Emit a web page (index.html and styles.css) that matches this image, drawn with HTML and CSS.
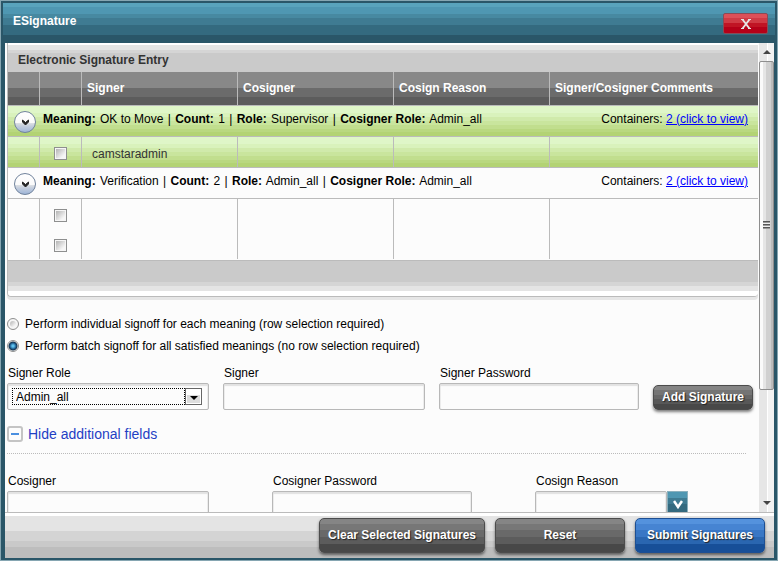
FILE: index.html
```html
<!DOCTYPE html>
<html lang="en">
<head>
<meta charset="utf-8">
<title>ESignature</title>
<link rel="stylesheet" href="styles.css">
</head>
<body>
<div class="dialog">
  <header class="titlebar">
    <h1 class="title">ESignature</h1>
    <button class="close" type="button" aria-label="Close">
      <svg width="10" height="10" viewBox="0 0 10 10"><path d="M1.500 0.500L8.500 9.500M8.500 0.500L1.500 9.500" stroke="#e6e6e6" stroke-width="1.800" fill="none"/><path d="M0 .5h3M7 .5h3M0 9.500h3M7 9.500h3" stroke="#e6e6e6"/></svg>
    </button>
  </header>

  <div class="body">
    <main class="content">
      <section class="panel">
        <h2 class="panel-title">Electronic Signature Entry</h2>
        <table class="grid">
          <colgroup><col class="c-toggle"><col class="c-check"><col class="c-data"><col class="c-data"><col class="c-data"><col></colgroup>
          <thead>
            <tr><th></th><th></th><th>Signer</th><th>Cosigner</th><th>Cosign Reason</th><th>Signer/Cosigner Comments</th></tr>
          </thead>
          <tbody>
            <tr class="group ok">
              <td colspan="6"><div class="group-row">
                <button class="toggle" type="button" aria-label="Collapse OK to Move">
                  <svg width="24" height="24" viewBox="0 0 24 24"><defs><linearGradient id="orb" x1="0" y1="0" x2="0" y2="1"><stop offset="0" stop-color="#fff"/><stop offset=".54" stop-color="#fafafa"/><stop offset=".56" stop-color="#dcdfe3"/><stop offset=".7" stop-color="#c3cddd"/><stop offset="1" stop-color="#9cb4d8"/></linearGradient></defs><circle cx="12" cy="12" r="10.5" fill="url(#orb)" stroke="#71839c"/><path d="M9.500 10v2l3 3 3-3v-2l-3 2.500z" fill="#222" stroke="#222"/></svg>
                </button>
                <span class="summary"><b>Meaning:</b> OK to Move <i>|</i> <b>Count:</b> 1 <i>|</i> <b>Role:</b> Supervisor <i>|</i> <b>Cosigner Role:</b> Admin_all</span>
                <span class="containers">Containers: <a href="#ok">2 (click to view)</a></span>
              </div></td>
            </tr>
            <tr class="entry ok ruled">
              <td></td><td class="pick"><input type="checkbox" aria-label="Select camstaradmin"></td><td>camstaradmin</td><td></td><td></td><td></td>
            </tr>
            <tr class="group">
              <td colspan="6"><div class="group-row">
                <button class="toggle" type="button" aria-label="Collapse Verification">
                  <svg width="24" height="24" viewBox="0 0 24 24"><circle cx="12" cy="12" r="10.5" fill="url(#orb)" stroke="#71839c"/><path d="M9.500 10v2l3 3 3-3v-2l-3 2.500z" fill="#222" stroke="#222"/></svg>
                </button>
                <span class="summary"><b>Meaning:</b> Verification <i>|</i> <b>Count:</b> 2 <i>|</i> <b>Role:</b> Admin_all <i>|</i> <b>Cosigner Role:</b> Admin_all</span>
                <span class="containers">Containers: <a href="#verification">2 (click to view)</a></span>
              </div></td>
            </tr>
            <tr class="entry"><td></td><td class="pick"><input type="checkbox" aria-label="Select verification 1"></td><td></td><td></td><td></td><td></td></tr>
            <tr class="entry"><td></td><td class="pick"><input type="checkbox" aria-label="Select verification 2"></td><td></td><td></td><td></td><td></td></tr>
          </tbody>
        </table>
        <div class="panel-foot"></div>
      </section>

      <div class="modes">
        <label><input type="radio" name="mode">Perform individual signoff for each meaning (row selection required)</label>
        <label><input type="radio" name="mode" checked>Perform batch signoff for all satisfied meanings (no row selection required)</label>
      </div>

      <div class="fields signer">
        <div class="field">
          <label for="role">Signer Role</label>
          <div class="box role">
            <select id="role"><option>Admin_all</option></select>
            <span class="drop"><svg width="8" height="4" viewBox="0 0 8 4"><path d="M0 0h8L4 4z"/></svg></span>
          </div>
        </div>
        <div class="field"><label for="signer">Signer</label><input class="box" id="signer" type="text"></div>
        <div class="field"><label for="spass">Signer Password</label><input class="box" id="spass" type="password"></div>
        <button class="btn small" type="button">Add Signature</button>
      </div>

      <div class="more">
        <a href="#additional"><svg width="16" height="16" viewBox="0 0 16 16"><rect x="1" y="1" width="14" height="14" rx="2" fill="#fcfcfc" stroke="#c4c4c4" stroke-width="2"/><path d="M4 8h8" stroke="#4a8fe0" stroke-width="2"/></svg>Hide additional fields</a>
      </div>

      <div class="fields cosigner" id="additional">
        <div class="field"><label for="cosigner">Cosigner</label><input class="box" id="cosigner" type="text"></div>
        <div class="field"><label for="cpass">Cosigner Password</label><input class="box" id="cpass" type="password"></div>
        <div class="field">
          <label for="reason">Cosign Reason</label>
          <div class="combo"><input class="box" id="reason" type="text"><button type="button" aria-label="Open reasons"><svg width="10" height="9" viewBox="0 0 10 9"><path d="M1 1l4 6 4-6" fill="none" stroke="#fff" stroke-width="2.500"/></svg></button></div>
        </div>
      </div>
    </main>

    <div class="scroll" aria-hidden="true">
      <svg class="arrow" width="8" height="4" viewBox="0 0 8 4"><path d="M4 0l4 4H0z" fill="#444"/></svg>
      <div class="thumb"><span class="grip"></span></div>
      <div class="rest"></div>
      <svg class="arrow" width="8" height="4" viewBox="0 0 8 4"><path d="M0 0h8L4 4z" fill="#444"/></svg>
    </div>
  </div>

  <footer class="actions">
    <button class="btn wide" type="button">Clear Selected Signatures</button>
    <button class="btn" type="button">Reset</button>
    <button class="btn primary" type="button">Submit Signatures</button>
  </footer>
</div>
</body>
</html>
```
FILE: styles.css
```css
* { box-sizing: border-box; }

body {
  margin: 0;
  font: 12px/16px "Liberation Sans", Arial, sans-serif;
  color: #000;
}

button, input, select { font: inherit; margin: 0; }
button { cursor: pointer; }
svg { display: block; }

.dialog {
  height: 100vh;
  display: flex;
  flex-direction: column;
  border: 1px solid #86a6b2;
  background: #2a5668;
  padding: 2px;
}

/* Title bar */
.titlebar {
  flex: none;
  height: 40px;
  padding: 0 7px 0 10px;
  display: flex;
  justify-content: space-between;
  align-items: flex-start;
  background: linear-gradient(#59a3bc 0 4px, #4f97b2 4px 11px, #4789a1 11px 15px, #3f7b92 15px 22px, #346a7f 22px 32px, #2a5668 32px);
}
.title { margin: 10px 0 0; font-size: 12px; line-height: 16px; color: #fff; }
.close {
  width: 45px;
  height: 21px;
  margin-top: 10px;
  padding: 0;
  display: flex;
  align-items: center;
  justify-content: center;
  border: 1px solid #8a4a55;
  border-radius: 2px;
  background: linear-gradient(#dc5058 0 4px, #cf3a44 4px 9px, #c01424 9px 13px, #b40018 13px);
}

.body {
  flex: 1;
  min-height: 0;
  margin-left: 2px;
  margin-right: 1px;
  display: flex;
  background: #fcfcfc;
}
.content { flex: 1; min-width: 0; overflow: hidden; padding-left: 2px; }

/* Signature grid */
.panel {
  border: solid #bbb;
  border-width: 0 0 1px 1px;
  border-radius: 0 0 4px 4px;
  box-shadow: 0 3px 0 #e6e6e6;
  margin-right: 1px;
}
.panel-title {
  margin: 0;
  height: 29px;
  padding: 9px 0 0 10px;
  font-size: 12px;
  line-height: 16px;
  color: #333;
  background: linear-gradient(#fff 0 2px, #e4e4e4 2px 7px, #d5d5d5 7px 10px, #cacaca 10px);
}
.grid { width: 100%; table-layout: fixed; border-collapse: separate; border-spacing: 0; }
.c-toggle { width: 32px; }
.c-check { width: 42px; }
.c-data { width: 156px; }
.grid th {
  height: 34px;
  padding: 0 0 2px 5px;
  text-align: left;
  color: #fff;
  border-right: 1px solid #bbb;
  border-bottom: 1px solid #bbb;
  background: linear-gradient(#888 0 16px, #6b6b6b 16px 25px, #5c5c5c 25px);
}
.grid th:last-child, .grid td:last-child { border-right: 0; }
.grid td { padding: 0; border-right: 1px solid #bbb; }
.group td, .ruled td { height: 31px; border-bottom: 1px solid #bbb; }
.entry td { height: 30px; padding: 3px 0 0 10px; color: #333; }
.entry.ruled td { height: 31px; }
.grid .pick { padding: 3px 0 0; text-align: center; }
.ok td { background: linear-gradient(#dff6c8 0 7px, #d9f2bc 7px 11px, #d0eaab 11px 15px, #c9e59d 15px 19px, #c1de8e 19px 23px, #b9d880 23px 26px, #b3d374 26px); }
.group-row { display: flex; align-items: flex-start; height: 30px; padding: 4px 10px 0 5px; }
.toggle { width: 24px; height: 24px; padding: 0; border: 0; background: none; }
.summary { flex: 1; margin-left: 6px; line-height: 18px; }
.summary i { font-style: normal; margin: 0 1px; }
.summary b { margin-right: 1px; }
.containers { line-height: 18px; }
.containers a { color: #00f; }
.panel-foot {
  height: 36px;
  margin-top: 1px;
  border-top: 1px solid #bbb;
  border-radius: 0 0 4px 4px;
  background: linear-gradient(#cacaca 0 21px, #d5d5d5 21px 25px, #e4e4e4 25px 30px, #fff 30px);
}

input[type="checkbox"], input[type="radio"] {
  appearance: none;
  display: block;
  border: 1px solid #8e8f8f;
  background: linear-gradient(135deg, #b4b4b4, #f6f6f6 80%) content-box, #f6f6f6;
}
input[type="checkbox"] { width: 13px; height: 13px; margin: 0 auto; padding: 1px; }
input[type="radio"] { width: 12px; height: 12px; padding: 2px; border-radius: 50%; }
input[type="radio"]:checked { background: radial-gradient(circle at 50% 50%, #5cc0ee 0 1px, #1c5a8c 3px, #16324c 4px, #f4f4f4 5px); }

.modes { margin-top: 18px; }
.modes label { display: flex; align-items: center; gap: 6px; height: 22px; padding-bottom: 4px; }

/* Form fields */
.fields { display: flex; align-items: flex-start; }
.fields label { display: block; padding-left: 1px; height: 18px; }
.box {
  display: block;
  width: 100%;
  height: 27px;
  padding: 4px;
  border: 1px solid #b8b8b8;
  border-radius: 2px;
  background: #fcfcfc;
  box-shadow: inset 0 2px 1px #e2e2e2, inset 1px 0 #eee, inset -1px 0 #eee;
}
.signer { gap: 14px; margin-top: 6px; }
.signer .field { width: 202px; }
.signer .field:nth-child(3) { width: 200px; }
.role { display: flex; padding: 4px 6px 4px 4px; }
.role select {
  flex: 1;
  min-width: 0;
  appearance: none;
  height: 17px;
  padding: 1px 3px 0;
  line-height: 15px;
  border: 1px dotted #000;
  border-radius: 0;
  background: #fcfcfc;
  color: #000;
}
.drop {
  width: 17px;
  height: 17px;
  display: flex;
  align-items: center;
  justify-content: center;
  padding-top: 2px;
  border: 1px solid #666;
  background: linear-gradient(#fff 0 6px, #ddd 6px);
  box-shadow: inset 0 0 0 1px #fff;
}

.btn {
  width: 130px;
  height: 35px;
  padding: 0 0 2px;
  border: 1px solid #4c4c4c;
  border-radius: 5px;
  font-weight: bold;
  color: #fff;
  text-shadow: 1px 1px 1px #222;
  background: linear-gradient(#858585 0 5px, #777 5px 11px, #696969 11px 18px, #5c5c5c 18px 25px, #484848 25px);
  box-shadow: 0 2px 3px rgba(0, 0, 0, .5);
}
.btn.small { width: 100px; height: 25px; margin-top: 20px; background: linear-gradient(#858585 0 4px, #747474 4px 9px, #666 9px 13px, #585858 13px 18px, #484848 18px); }
.btn.wide { width: 166px; }
.btn.primary { border-color: #1d4f93; background: linear-gradient(#5492dd 0 5px, #4684d2 5px 11px, #3977c5 11px 18px, #2a66b0 18px 25px, #174f98 25px); }

.more { margin: 16px 13px 0 0; padding-bottom: 11px; border-bottom: 1px dotted #bbb; }
.more a { display: flex; align-items: center; gap: 5px; font-size: 14px; color: #1f3fc4; text-decoration: none; }
.cosigner { gap: 63px; margin-top: 19px; }
.cosigner .field { width: 202px; }
.cosigner .field:nth-child(n+2) { width: 200px; }
.combo { display: flex; width: 153px; }
.combo .box { flex: 1; min-width: 0; }
.combo button {
  width: 21px;
  height: 27px;
  padding: 0;
  display: flex;
  align-items: center;
  justify-content: center;
  border: 1px solid #8ab0bd;
  background: linear-gradient(#4f97b2 0 6px, #3f7b92 6px 12px, #346a7f 12px);
}

/* Scrollbar */
.scroll {
  flex: none;
  width: 15px;
  display: flex;
  flex-direction: column;
  align-items: center;
  background: linear-gradient(90deg, #e6e6e6 0 8px, #fff 8px 9px, #f2f2f2 9px);
}
.arrow { flex: none; margin: 7px 0; }
.thumb {
  flex: 329;
  width: 15px;
  display: flex;
  align-items: center;
  justify-content: center;
  border: 1px solid #8e8e8e;
  border-radius: 2px;
  background: linear-gradient(90deg, #fafafa 0 3px, #e5e5e5 3px 6px, #d0d0d0 6px 11px, #bbb 11px);
}
.grip { width: 7px; height: 8px; background: repeating-linear-gradient(#555 0 1px, #999 1px 2px, #eee 2px 3px); }
.rest { flex: 105; }

/* Footer */
.actions {
  flex: none;
  height: 46px;
  margin-left: 2px;
  margin-right: 1px;
  padding: 5px 9px 0 0;
  display: flex;
  justify-content: flex-end;
  gap: 10px;
  border-top: 1px solid #bbb;
  background: linear-gradient(#fff 0 3px, #e4e4e4 3px 18px, #d4d4d4 18px 28px, #c9c9c9 28px 34px, #bdbdbd 34px);
}
```
